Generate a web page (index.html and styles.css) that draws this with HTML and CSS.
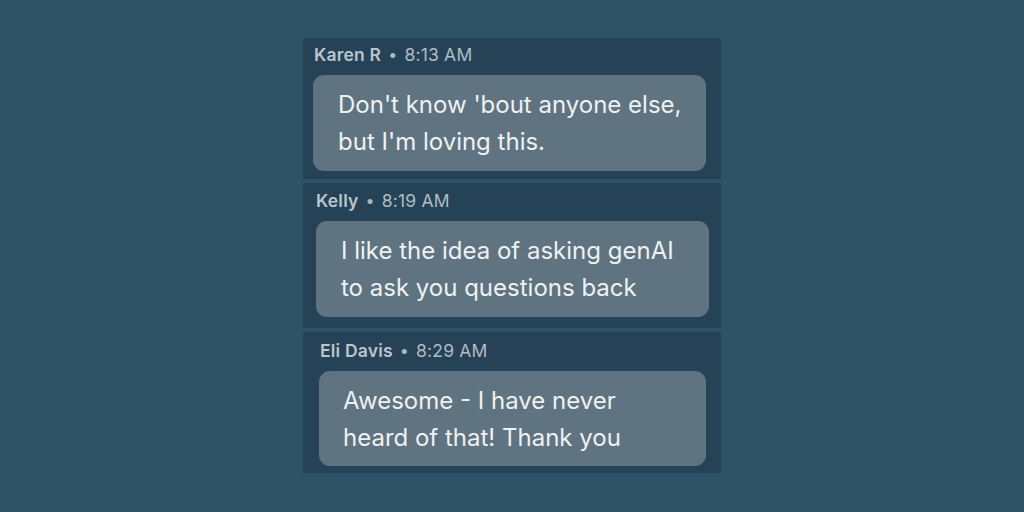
FILE: index.html
```html
<!DOCTYPE html>
<html>
<head>
<meta charset="utf-8">
<link rel="stylesheet" href="styles.css">
</head>
<body>
<div class="feed">
  <div class="card card-a">
    <div class="meta"><span class="name">Karen R</span><span class="dot">•</span><span class="time">8:13 AM</span></div>
    <div class="bubble">Don't know 'bout anyone else,<br>but I'm loving this.</div>
  </div>
  <div class="card card-b">
    <div class="meta"><span class="name">Kelly</span><span class="dot">•</span><span class="time">8:19 AM</span></div>
    <div class="bubble">I like the idea of asking genAI<br>to ask you questions back</div>
  </div>
  <div class="card card-c">
    <div class="meta"><span class="name">Eli Davis</span><span class="dot">•</span><span class="time">8:29 AM</span></div>
    <div class="bubble">Awesome - I have never<br>heard of that! Thank you</div>
  </div>
</div>
</body>
</html>
```
FILE: styles.css
```css
html, body {
  margin: 0;
  padding: 0;
}
body {
  width: 1024px;
  height: 512px;
  background: #2e5266;
  font-family: Inter, "Noto Sans", sans-serif;
  overflow: hidden;
}
.feed {
  width: 418px;
  margin: 38px auto 0;
  display: flex;
  flex-direction: column;
  gap: 4px;
}
.card {
  background: #264257;
  padding: 6px 15px 8px 10px;
}
.card-b { padding: 7px 12px 11px 13px; }
.card-c { padding: 8px 15px 7px 16px; }
.meta {
  display: flex;
  align-items: center;
  gap: 7px;
  height: 21px;
  font-size: 17.5px;
  line-height: 21px;
  letter-spacing: 0.2px;
  margin-left: 1px;
  margin-bottom: 10px;
}
.card-b .meta { margin-left: 0; }
.card-c .meta { margin-left: 1px; }
.name {
  font-weight: 600;
  color: #b9c5cd;
}
.dot {
  color: #aab8c1;
  font-size: 16px;
}
.time {
  color: #aebcc5;
}
.bubble {
  background: #5f7380;
  border-radius: 11px;
  padding: 11px 20px 11px 25px;
  font-size: 24px;
  line-height: 37px;
  color: #eef1f3;
}
.card-c .bubble { padding-left: 24px; height: 73px; }
```
